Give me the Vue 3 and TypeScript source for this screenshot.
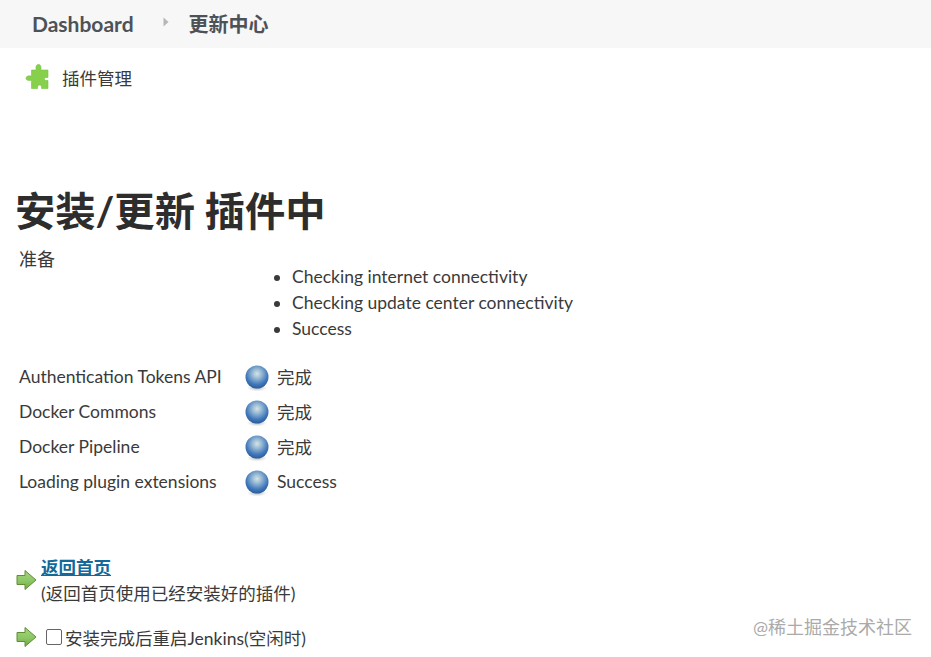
<script setup lang="ts">
interface Job { name: string; status: string }
const checks: string[] = ['Checking internet connectivity', 'Checking update center connectivity', 'Success']
const jobs: Job[] = [
  { name: 'Authentication Tokens API', status: '完成' },
  { name: 'Docker Commons', status: '完成' },
  { name: 'Docker Pipeline', status: '完成' },
  { name: 'Loading plugin extensions', status: 'Success' },
]
</script>

<template>
  <div class="page">
    <header class="crumbs">
      <span class="crumb">Dashboard</span>
      <svg class="caret" width="6" height="10" viewBox="0 0 6 10"><path d="M0.5 0.5 L5.5 5 L0.5 9.5 Z" fill="#b4b6b8" /></svg>
      <span class="crumb">更新中心</span>
    </header>

    <div class="task">
      <svg class="puzzle" width="26" height="28" viewBox="0 0 26 28">
        <path d="M14.500 1.500c2.300 0 3 2 2.300 5.500H24v7.500h-2.200c-1.700 0-2 3 .1 3H24v8h-6.500c.5-2.300-.6-3.500-1.900-3.500s-2.400 1.300-1.900 3.500H7.500v-8.300c-2.300.8-5.500.3-5.500-1.900 0-2.400 3.200-3 5.500-2.100V7h4.700c-.8-3.500.1-5.500 2.300-5.500z" fill="#86d04c" stroke="#78c442" stroke-width=".6" />
      </svg>
      <span>插件管理</span>
    </div>

    <main class="content">
      <h1>安装/更新 插件中</h1>

      <div class="prepare">
        <div class="prepare-label">准备</div>
        <ul>
          <li v-for="c in checks" :key="c">{{ c }}</li>
        </ul>
      </div>

      <div class="jobs">
        <div v-for="j in jobs" :key="j.name" class="job">
          <span class="job-name">{{ j.name }}</span>
          <svg class="ball" width="26" height="28" viewBox="0 0 26 28">
            <defs>
              <radialGradient id="ballFill" cx="0.5" cy="0.36" r="0.62">
                <stop offset="0" stop-color="#d6e4e2" />
                <stop offset="0.3" stop-color="#9cbdd6" />
                <stop offset="0.75" stop-color="#4279bb" />
                <stop offset="1" stop-color="#2c5f9f" />
              </radialGradient>
              <radialGradient id="ballShade">
                <stop offset="0" stop-color="#8a8a8a" stop-opacity="0.6" />
                <stop offset="1" stop-color="#9a9a9a" stop-opacity="0" />
              </radialGradient>
            </defs>
            <ellipse cx="13" cy="24" rx="10" ry="3.500" fill="url(#ballShade)" />
            <circle cx="13" cy="13" r="11.500" fill="url(#ballFill)" />
          </svg>
          <span class="job-status">{{ j.status }}</span>
        </div>
      </div>

      <div class="action first">
        <svg class="arrow" width="21" height="22" viewBox="0 0 21 22">
          <defs>
            <linearGradient id="arrowFill" x1="0" y1="0" x2="0" y2="1">
              <stop offset="0" stop-color="#a5d37a" />
              <stop offset="0.55" stop-color="#8cc765" />
              <stop offset="1" stop-color="#6fa843" />
            </linearGradient>
          </defs>
          <path d="M1 6.500h8V1.500L20 11 9 20.500v-5H1z" fill="url(#arrowFill)" stroke="#5f8f35" stroke-width="1" />
        </svg>
        <div class="action-text">
          <a class="home" href="#">返回首页</a>
          <div>(返回首页使用已经安装好的插件)</div>
        </div>
      </div>

      <div class="action second">
        <svg class="arrow" width="21" height="22" viewBox="0 0 21 22">
          <path d="M1 6.500h8V1.500L20 11 9 20.500v-5H1z" fill="url(#arrowFill)" stroke="#5f8f35" stroke-width="1" />
        </svg>
        <label class="restart">
          <span class="box"></span>
          <span>安装完成后重启Jenkins(空闲时)</span>
        </label>
      </div>
    </main>

    <div class="mark">@稀土掘金技术社区</div>
  </div>
</template>

<style>
html, body { margin: 0; background: #fff; overflow: hidden; }
</style>

<style scoped>
.page {
  position: relative;
  width: 931px;
  height: 657px;
  overflow: hidden;
  color: #3a3a3a;
  font-family: Lato, "Noto Sans CJK SC", sans-serif;
  font-size: 17.500px;
}
.crumbs {
  display: flex;
  align-items: center;
  box-sizing: border-box;
  height: 48px;
  padding: 0 0 2px 32px;
  background: #f7f7f8;
}
.crumb {
  font-size: 21px;
  font-weight: 700;
  color: #4d5257;
}
.caret { margin: 0 20px 0 29px; position: relative; top: -1px; }
.crumb:last-of-type { font-size: 20px; }
.task {
  display: flex;
  align-items: center;
  height: 58px;
  padding-left: 24px;
  gap: 12px;
  font-size: 17.500px;
}
.content { padding-left: 16px; }
h1 {
  margin: 75px 0 0 -1px;
  font-size: 40.300px;
  line-height: 60px;
  font-weight: 700;
  color: #2d2d2d;
}
.prepare { margin-top: 5px; padding-left: 3px; }
.prepare-label { font-size: 18px; line-height: 26px; }
ul {
  margin: -8px 0 0;
  padding-left: 273px;
  line-height: 26px;
}
.jobs { margin-top: 17px; padding-left: 3px; }
.job {
  display: flex;
  align-items: center;
  height: 35px;
}
.job-name { width: 225px; flex: none; }
.ball { flex: none; margin-top: 2px; }
.job-status { margin-left: 7px; }
.action { display: flex; align-items: center; }
.first { margin-top: 56px; }
.first .arrow { margin-top: -2px; }
.second { margin-top: 17px; height: 26px; }
.arrow { flex: none; }
.action-text { margin-left: 4px; line-height: 26px; }
.home {
  font-weight: 700;
  color: #12699a;
  text-decoration: underline;
}
.restart { display: flex; align-items: center; margin-left: 9px; }
.box {
  width: 16px;
  height: 16px;
  box-sizing: border-box;
  border: 1px solid #666;
  border-radius: 2px;
  margin-right: 3px;
  background: #fff;
}
.mark {
  position: absolute;
  right: 19px;
  top: 616px;
  font-size: 18px;
  line-height: 22px;
  color: #aaa;
}
</style>
